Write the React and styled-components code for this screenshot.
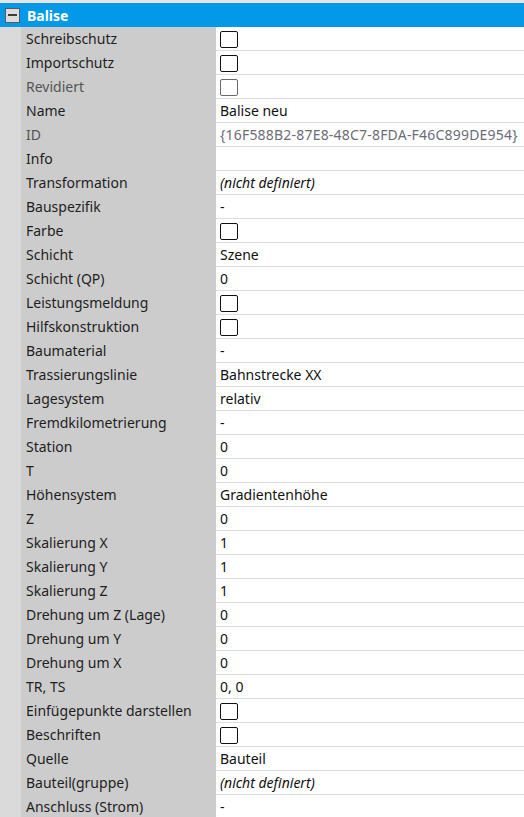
import React from 'react';
import styled, {createGlobalStyle} from "styled-components";

const Global = createGlobalStyle`
    body {
        margin: 0;
        background: #ffffff;
        font-family: "Noto Sans", "Open Sans", sans-serif;
        overflow: hidden;
    }
`

const Grid = styled.div`
    width: 524px;
    height: 817px;
    overflow: hidden;
    background: #ffffff;
    border-top: 3px solid #e6e6e6;
`

const Header = styled.div`
    display: flex;
    align-items: center;
    gap: 7px;
    height: 24px;
    padding-left: 5px;
    background: #0399e8;
    color: #ffffff;
    font-weight: 700;
    font-size: 14px;
`

const Toggle = styled.span`
    display: flex;
    align-items: center;
    justify-content: center;
    box-sizing: border-box;
    width: 15px;
    height: 15px;
    background: #dcdcdc;
    border: 1px solid #5a5a5a;
    &::after {
        content: "";
        width: 9px;
        height: 2px;
        background: #3c3c3c;
    }
`

const Row = styled.div`
    display: grid;
    grid-template-columns: 21px 195px 1fr;
    height: 24px;
    font-size: 14px;
`

const Gutter = styled.div`
    background: #dadada;
`

const Label = styled.div`
    display: flex;
    align-items: center;
    padding: 0 0 2px 5px;
    background: #cccccc;
    color: ${p => p.dim ? '#555555' : '#1e1e1e'};
    white-space: nowrap;
`

const Value = styled.div`
    display: flex;
    align-items: center;
    padding: 0 0 1px 4px;
    border-bottom: 1px solid #dcdcdc;
    color: ${p => p.dim ? '#6c6c78' : '#111111'};
    font-style: ${p => p.italic ? 'italic' : 'normal'};
    letter-spacing: ${p => p.dim ? '0.2px' : '0'};
    white-space: nowrap;
    overflow: hidden;
`

const Check = styled.span`
    box-sizing: border-box;
    width: 18px;
    height: 17px;
    margin-top: 2px;
    border: 1.5px solid ${p => p.dim ? '#6a6a6a' : '#111111'};
    border-radius: 2px;
    background: #ffffff;
`

const rows = [
    ["Schreibschutz", "check"],
    ["Importschutz", "check"],
    ["Revidiert", "check", "dim"],
    ["Name", "Balise neu"],
    ["ID", "{16F588B2-87E8-48C7-8FDA-F46C899DE954}", "dim"],
    ["Info", ""],
    ["Transformation", "(nicht definiert)", "italic"],
    ["Bauspezifik", "-"],
    ["Farbe", "check"],
    ["Schicht", "Szene"],
    ["Schicht (QP)", "0"],
    ["Leistungsmeldung", "check"],
    ["Hilfskonstruktion", "check"],
    ["Baumaterial", "-"],
    ["Trassierungslinie", "Bahnstrecke XX"],
    ["Lagesystem", "relativ"],
    ["Fremdkilometrierung", "-"],
    ["Station", "0"],
    ["T", "0"],
    ["Höhensystem", "Gradientenhöhe"],
    ["Z", "0"],
    ["Skalierung X", "1"],
    ["Skalierung Y", "1"],
    ["Skalierung Z", "1"],
    ["Drehung um Z (Lage)", "0"],
    ["Drehung um Y", "0"],
    ["Drehung um X", "0"],
    ["TR, TS", "0, 0"],
    ["Einfügepunkte darstellen", "check"],
    ["Beschriften", "check"],
    ["Quelle", "Bauteil"],
    ["Bauteil(gruppe)", "(nicht definiert)", "italic"],
    ["Anschluss (Strom)", "-"],
]

const App = () => {
    return (
        <>
            <Global/>
            <Grid>
                <Header>
                    <Toggle/>
                    Balise
                </Header>
                {rows.map(([label, value, flag]) => (
                    <Row key={label}>
                        <Gutter/>
                        <Label dim={flag === 'dim'}>{label}</Label>
                        <Value dim={flag === 'dim'} italic={flag === 'italic'}>
                            {value === 'check' ? <Check dim={flag === 'dim'}/> : value}
                        </Value>
                    </Row>
                ))}
            </Grid>
        </>
    )
}

export default App
